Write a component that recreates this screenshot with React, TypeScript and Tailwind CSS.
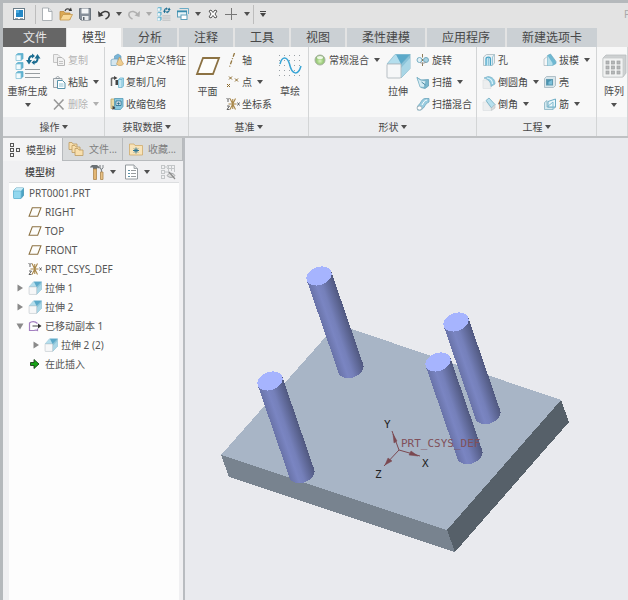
import type { ReactNode } from "react";

type P = { children?: ReactNode };

const Svg = ({ size = 14, box, children }: P & { size?: number; box?: number }) => (
  <svg width={size} height={size} viewBox={`0 0 ${box ?? size} ${box ?? size}`} fill="none" className="shrink-0" aria-hidden="true">
    {children}
  </svg>
);

const Caret = ({ color = "#505050" }: { color?: string }) => (
  <svg width="6" height="4" viewBox="0 0 6 4" className="shrink-0" aria-hidden="true">
    <path d="M0 0H6L3 4Z" fill={color} />
  </svg>
);

/* ---------- quick access icons ---------- */
const AppIcon = () => (
  <Svg size={14}>
    <rect x="1.500" y="1.500" width="11" height="11" fill="#fff" stroke="#6b7d88" />
    <rect x="4" y="3" width="7" height="7" fill="#2388c6" />
    <path d="M4 3H7V6H4Z" fill="#4aa9dd" />
    <path d="M3 11.500H6M8 11.500H11" stroke="#9aa7af" />
  </Svg>
);
const NewIcon = () => (
  <Svg size={14}>
    <path d="M2.500 1H8.500L12 4.500V13.500H2.500Z" fill="#fff" stroke="#9ba1a6" strokeWidth=".8" />
    <path d="M8.500 1V4.500H12" fill="#dfe3e7" stroke="#9ba1a6" strokeWidth=".8" />
  </Svg>
);
const OpenIcon = () => (
  <Svg size={14}>
    <path d="M1 12.500V4.500H5L6 6H11V12.500Z" fill="#dba954" stroke="#bd8a3c" strokeWidth=".8" />
    <path d="M1 13L4 7.500H13.500L10.500 13Z" fill="#f8d998" stroke="#c4974c" strokeWidth=".8" />
    <path d="M6 4C7 1.500 9 1.500 11 2.500" stroke="#444" strokeWidth="1.200" />
    <path d="M9.500 4L13 4L12 .5Z" fill="#333" />
  </Svg>
);
const SaveIcon = () => (
  <Svg size={14}>
    <path d="M1.500 1.500H12.500V13H3L1.500 11.500Z" fill="#87909a" stroke="#6c757e" />
    <rect x="3.500" y="1.500" width="7" height="5" fill="#f4f6f7" />
    <rect x="4" y="9" width="6.500" height="4" fill="#e8ebed" />
    <rect x="5" y="10" width="1.500" height="3" fill="#59636c" />
  </Svg>
);
const UndoIcon = ({ color = "#3c3c3c", flip = false }: { color?: string; flip?: boolean }) => (
  <Svg size={14}>
    <g transform={flip ? "matrix(-1 0 0 1 14 0)" : undefined}>
      <path d="M3 8C5.500 4 10 3.500 11.800 6C13 8.500 11 11 8.500 12" stroke={color} strokeWidth="1.600" />
      <path d="M1 4L1.500 10L6.500 8.500Z" fill={color} />
    </g>
  </Svg>
);
const RegenIcon = ({ size = 14 }: { size?: number }) => (
  <Svg size={size} box={26}>
    {[0, 9, 18].map((y) => (
      <g key={y} strokeWidth=".8">
        <path d={`M1 ${y + 2}L3 ${y + 0.5}H8V${y + 5.5}L6 ${y + 7.5}Z`} fill="#5bb0cf" stroke="#5fb1ce" />
        <path d={`M1 ${y + 2}H6V${y + 7.5}H1Z`} fill="#f2fafd" stroke="#86c3d8" />
      </g>
    ))}
    <path d="M14 8C13.500 4 15.500 3 18 3M22.500 4.500C23 8.500 21 9.500 18.500 9.500" stroke="#1b6d91" strokeWidth="2" />
    <path d="M11 7H17L14 11.500ZM19.500 5.500H25.500L22.500 1ZM17 .5V5.500L20 3ZM19.500 7V12L16.500 9.500Z" fill="#1b6d91" />
    <path d="M10 16.500H25M10 20.500H25M10 24.500H25" stroke="#979da1" />
  </Svg>
);
const WindowsIcon = () => (
  <Svg size={14}>
    <path d="M3.500 1.500H12.500V7" stroke="#6cacc6" />
    <rect x="1.500" y="4" width="9" height="6" fill="#e7f3f8" stroke="#5e9fb9" />
    <path d="M1 4.500H11" stroke="#378cae" strokeWidth="1.500" />
    <rect x="5" y="8" width="6" height="4.500" fill="#fff" stroke="#5e9fb9" />
  </Svg>
);
const CloseIcon = () => (
  <Svg size={14}>
    <path d="M3 4L5 3L7 5.500L9 3L11 4L9 7L11 10L9 11L7 8.500L5 11L3 10L5 7Z" fill="#fff" stroke="#555" />
  </Svg>
);
const PlusIcon = () => (
  <Svg size={14}>
    <path d="M6.500 1V13M0 7.500H12" stroke="#777" />
  </Svg>
);

/* ---------- ribbon icons ---------- */
const CopyIcon = () => (
  <Svg>
    <path d="M1.500 1.500H6L8 3.500V9.500H1.500Z" fill="#eee" stroke="#c4c4c4" />
    <path d="M5.500 4.500H10L12.500 7V12.500H5.500Z" fill="#f3f3f3" stroke="#b6b6b6" />
    <path d="M7 8.500H11M7 10.500H11" stroke="#c4c4c4" />
  </Svg>
);
const PasteIcon = () => (
  <Svg>
    <path d="M1.500 3.500H10V12.500H1.500Z" fill="#eff1f2" stroke="#9ba3a8" />
    <path d="M4 3.500C4 1 7.500 1 7.500 3.500Z" fill="#fff" stroke="#8f989e" />
    <path d="M5.500 5.500H10.500L13 8V13.500H5.500Z" fill="#fff" stroke="#5792aa" />
    <path d="M7 9H11.500M7 11H11.500" stroke="#8cc0d2" />
  </Svg>
);
const DeleteIcon = () => (
  <Svg>
    <path d="M2 2.500L11.500 12.500M11.500 2.500L2 12.500" stroke="#999" strokeWidth="1.600" />
  </Svg>
);
const UdfIcon = () => (
  <Svg>
    <path d="M4.500 3L8 1L11 3V7L8 9L4.500 7Z" fill="#78b4d6" stroke="#5d97b8" strokeWidth=".6" />
    <path d="M1 7L3 6H8V11L6 12.500H1Z" fill="#d4e6ef" stroke="#6d9fba" strokeWidth=".7" />
    <path d="M9.500 4L13.500 11C12 13 8 13 6.500 11Z" fill="#efcd91" stroke="#bd9555" strokeWidth=".6" />
  </Svg>
);
const CopyGeomIcon = () => (
  <Svg>
    <path d="M1.500 3V11M1.500 3H5" stroke="#666" strokeWidth="1.500" />
    <path d="M4 1L7.500 3L4 5ZM5.500 5H8V10H5.500Z" fill="#444" />
    <path d="M8.500 4.500L10 3H13.500V11L12 12.500H8.500Z" fill="#c4e7f3" stroke="#6bb4cf" strokeWidth=".8" />
    <path d="M8.500 4.500H12V12.500M12 4.500L13.500 3" stroke="#6bb4cf" strokeWidth=".8" />
  </Svg>
);
const ShrinkIcon = () => (
  <Svg>
    <path d="M1 2H10V11.500H1Z" fill="#ecdca9" stroke="#bba565" strokeWidth=".8" />
    <path d="M4.500 1.500H13V9.500L10.500 12.500H4.500Z" fill="#88c8df" stroke="#549bb8" strokeWidth=".8" />
    <path d="M6 4H11V8.500H6Z" fill="#fff" stroke="#3d7d9a" />
    <path d="M2.500 8.500L5.500 11L2.500 13Z" fill="#444" />
    <circle cx="8.500" cy="6.500" r="1.200" fill="#276a88" />
  </Svg>
);
const PlaneIcon = ({ size = 14 }: { size?: number }) => (
  <svg width={size} height={size} viewBox="0 0 26 26" fill="none" className="shrink-0" aria-hidden="true">
    <path d="M8 5H24L18 21H2Z" fill="#fdfdfb" stroke="#8c7243" strokeWidth={size > 20 ? 1.8 : 2} />
  </svg>
);
const AxisIcon = () => (
  <Svg>
    <path d="M8.500 0L3.500 14" stroke="#93763f" strokeWidth="1.300" strokeDasharray="4 1.500 1 1.500" />
  </Svg>
);
const PointIcon = () => (
  <Svg>
    <path d="M3 1.500L6 4.500M6 1.500L3 4.500M9 3.500L12 6.500M12 3.500L9 6.500M1 9L4 12M4 9L1 12" stroke="#8c6b2c" />
  </Svg>
);
const CsysIcon = () => (
  <Svg>
    <path d="M4 1.500L9.500 12.500M9.500 1.500L4 12.500M2.500 7H10.500M6.750 2V12" stroke="#a9884a" strokeWidth="1.100" />
    <path d="M.5 1L2 2.500L3.500 1M2 2.500V5M1 9H3.500L1 12.500H3.500M11.500 5.500L13.500 8.500M13.500 5.500L11.500 8.500" stroke="#555" strokeWidth=".9" />
  </Svg>
);
const SketchIcon = () => (
  <Svg size={26}>
    {[3, 8, 13, 18, 23].map((y) => (
      <path key={y} d={`M2 ${y - 0.5}H25`} stroke="#9aa1a6" strokeDasharray="1 4" />
    ))}
    <path d="M3 11C5 3 10 3 12.500 11C15 22 21 23 24 13" stroke="#38a5d6" strokeWidth="1.500" />
  </Svg>
);
const BlendIcon = () => (
  <Svg>
    <defs>
      <radialGradient id="blend" cx=".5" cy=".6" r=".6">
        <stop offset="0" stopColor="#d8f3c0" />
        <stop offset=".5" stopColor="#a0cf7f" />
        <stop offset="1" stopColor="#87ad73" />
      </radialGradient>
    </defs>
    <circle cx="7" cy="7" r="5" fill="url(#blend)" stroke="#a7b59f" />
    <ellipse cx="7" cy="4.500" rx="3" ry="1.500" fill="#eef8e6" />
  </Svg>
);
const ExtrudeIcon = ({ size = 14 }: { size?: number }) => (
  <svg width={size} height={size} viewBox="0 0 26 26" fill="none" className="shrink-0" aria-hidden="true">
    <path d="M2 11L10 1.500H25L16 11Z" fill="#b4deed" stroke="#8fc0d2" strokeWidth=".8" />
    <path d="M16 11L25 1.500V15.500L16 25Z" fill="#8ac3d9" stroke="#77afc5" strokeWidth=".8" />
    <path d="M11 1.500H25L16 11Z" fill="#5ba9c9" />
    <path d="M16 15L25 5V15.500L16 25Z" fill="#a9d6e6" />
    <rect x="2" y="11" width="14" height="14" rx="1" fill="#f6f7f8" stroke="#b7bfc4" />
  </svg>
);
const RevolveIcon = () => (
  <Svg>
    <ellipse cx="3.500" cy="7" rx="2.500" ry="2.500" fill="#e3f1f6" stroke="#75aec4" />
    <ellipse cx="10" cy="7" rx="2.500" ry="2.500" fill="#a8d4e3" stroke="#73a9be" />
    <path d="M6.500 1V4.500M6.500 6V8M6.500 9.500V13" stroke="#8a7a58" />
    <path d="M4 9.500C6 10.500 8 10.500 10 9" stroke="#999" />
  </Svg>
);
const SweepIcon = () => (
  <Svg>
    <path d="M1 2.500L5 5L12.500 4.500V11L9 13.500L5 12.500Z" fill="#79b6cd" stroke="#5a99b1" strokeWidth=".7" />
    <path d="M1 2.500L4.500 5L10 6L8 12.500L4 12Z" fill="#d4ebf3" stroke="#74adc3" strokeWidth=".7" />
    <path d="M5.500 7L9.500 10" stroke="#4d8ca5" />
  </Svg>
);
const SweptBlendIcon = () => (
  <Svg>
    <path d="M1.500 9C5 7 5 2 9 1.500H13V5C9 6 9 11 5 13H1.500Z" fill="#9bcde0" stroke="#6ba5bc" strokeWidth=".8" />
    <ellipse cx="3.500" cy="11" rx="2.500" ry="2" fill="#fff" stroke="#97a9b1" strokeWidth=".8" />
    <path d="M6 8C8 5 8 3.500 11 3" stroke="#fff" />
  </Svg>
);
const HoleIcon = () => (
  <Svg>
    <path d="M1.500 4L4.500 1.500H12.500V10L10 12.500H1.500Z" fill="#eaf1f4" stroke="#a9b7be" strokeWidth=".8" />
    <path d="M4 12.500V6C4 3.500 8.500 3.500 8.500 6V12.500" fill="#c3e7f3" stroke="#46a3c6" strokeWidth="1.200" />
    <path d="M6.500 5V12.500M10.500 4V12.500M10.500 4L12.500 1.500" stroke="#86bdd2" strokeWidth=".8" />
  </Svg>
);
const RoundIcon = () => (
  <Svg>
    <path d="M1 5H7L9 13.500H1Z" fill="#eceeef" stroke="#dde0e2" strokeWidth=".7" />
    <path d="M2 3L6 1.500C11 2 13 5 13 9L9 11.500C9 7 6.500 4.500 2 3Z" fill="#8fcbe0" stroke="#7db2c7" strokeWidth=".7" />
    <path d="M5 3C8.500 3.500 10.500 6 10.500 9" stroke="#dff4fb" strokeWidth="1.200" />
  </Svg>
);
const ChamferIcon = () => (
  <Svg>
    <path d="M1 5H5L9 12.500V13.500H1Z" fill="#eceeef" stroke="#dde0e2" strokeWidth=".7" />
    <path d="M4 3.500L7 1L13 7.500L9.500 11Z" fill="#b7e0ee" stroke="#6ea9bf" strokeWidth=".8" />
    <path d="M9.500 11L13 7.500V11L9.500 13.500Z" fill="#d9dcdd" stroke="#b9bfc2" strokeWidth=".6" />
  </Svg>
);
const DraftIcon = () => (
  <Svg>
    <path d="M1 6L5 3V12.500H1Z" fill="#f5f7f8" stroke="#b1bcc1" strokeWidth=".8" />
    <path d="M4.500 2.500L7.500 1L13 8.500V10.500L9.500 12.500H4.500Z" fill="#6fb8d2" stroke="#6aa9c0" strokeWidth=".7" />
    <path d="M4.500 2.500L9.500 10V12.500H4.500Z" fill="#b7dfeb" />
  </Svg>
);
const ShellIcon = () => (
  <Svg>
    <path d="M1.500 3.500L3.500 1.500H12.500V10.500L10.500 12.500H1.500Z" fill="#d9e6eb" stroke="#a2b4bc" strokeWidth=".8" />
    <rect x="3.500" y="4.500" width="6" height="5.500" fill="#4c93b0" stroke="#5f9bb2" />
    <path d="M5.500 7L9 5V9.500H5.500Z" fill="#7cc0da" />
  </Svg>
);
const RibIcon = () => (
  <Svg>
    <path d="M1.500 5.500L4 3.500V10H12.500L10 12.500H1.500Z" fill="#d4e9f0" stroke="#86b2c2" strokeWidth=".8" />
    <path d="M5 4.500L12.500 2V10H5Z" fill="#eaf6fa" stroke="#6dadc5" />
    <path d="M4 10L10 5V12.500" stroke="#7ebbd0" />
  </Svg>
);
const PatternIcon = () => (
  <Svg size={26}>
    <path d="M2 5L5 2H25V20L22 24H2Z" fill="#cdd0d1" stroke="#b9bdbf" strokeWidth=".8" />
    <rect x="2" y="5" width="20" height="19" rx="1" fill="#f1f2f2" stroke="#c8cbcc" strokeWidth=".8" />
    {[8, 13, 18].map((y) =>
      [5, 10.5, 16].map((x) => <rect key={`${x}-${y}`} x={x} y={y} width="3" height="3" fill="#b5b7b8" stroke="#9fa1a2" strokeWidth=".7" />),
    )}
  </Svg>
);

/* ---------- tree icons ---------- */
const TreeIcon = ({ color = "#555" }: { color?: string }) => (
  <svg width="12" height="16" viewBox="0 0 12 16" fill="none" className="shrink-0" stroke={color} aria-hidden="true">
    <rect x="1.500" y="1.500" width="3" height="3" />
    <rect x="1.500" y="6.500" width="3" height="3" />
    <rect x="1.500" y="11.500" width="3" height="3" />
    <rect x="7.500" y="6.500" width="3" height="3" />
  </svg>
);
const FoldersIcon = () => (
  <Svg size={16}>
    {[0, 3, 6].map((d) => (
      <path key={d} d={`M${d + 1} ${d + 1.5}H${d + 4}L${d + 5} ${d + 3}H${d + 9}V${d + 8.5}H${d + 1}Z`} fill="#f8dfad" stroke="#bb9a60" strokeWidth=".8" />
    ))}
  </Svg>
);
const FavoriteIcon = () => (
  <Svg size={14}>
    <path d="M.5 2H5L6 3.500H13.500V13H.5Z" fill="#f8e3b8" stroke="#cfab6c" strokeWidth=".8" />
    <path d="M7 5.500V11.500M4 8.500H10M5 6.500L9 10.500M9 6.500L5 10.500" stroke="#2c7494" />
  </Svg>
);
const ToolsIcon = () => (
  <Svg size={16}>
    <path d="M1 3L3 1H8L11 3.500L9 4.500L8 3.500V5H4V3.500H1Z" fill="#6a7074" />
    <path d="M4.500 5H7.500V15.500H4.500Z" fill="#e3b674" stroke="#ad874c" strokeWidth=".8" />
    <path d="M11 1V4L12.500 5.500V8" stroke="#80868a" strokeWidth="1.200" />
    <path d="M14 1V4L12.500 5.500" stroke="#80868a" />
    <path d="M11.500 8H14V15.500H11.500Z" fill="#e8c287" stroke="#ad874c" strokeWidth=".8" />
  </Svg>
);
const ListIcon = () => (
  <Svg size={16}>
    <path d="M1.500 1H10L13.500 4.500V15H1.500Z" fill="#fff" stroke="#949a9e" />
    <path d="M10 1V4.500H13.500" fill="#dde0e2" stroke="#949a9e" strokeWidth=".8" />
    <path d="M4 6.500H6M4 9.500H6M4 12.500H6" stroke="#5b90a6" />
    <path d="M7 6.500H12M7 9.500H12M7 12.500H12" stroke="#999d9f" />
  </Svg>
);
const HiddenTreeIcon = () => (
  <Svg size={16}>
    <g stroke="#c3c6c8">
      <rect x="1.500" y="1.500" width="3" height="3" />
      <rect x="1.500" y="6.500" width="3" height="3" />
      <rect x="1.500" y="11.500" width="3" height="3" />
      <path d="M5 3H8M5 8H8M8.500 1V9M11.500 1V7M14.500 1V8M7 4.500H14M7 1.500H15" />
    </g>
    <path d="M7 11.500C9 8.500 13 8.500 15 11.500C13 14 9 14 7 11.500Z" fill="#ddd" stroke="#a3a6a8" />
    <path d="M9 8L15 15" stroke="#8c8c8c" strokeWidth="1.200" />
  </Svg>
);
const PartIcon = () => (
  <Svg>
    <path d="M1.500 5L4 2H11.500V9.500L9 12.500H2Z" fill="#4ba3c5" stroke="#4595b4" strokeWidth=".8" strokeLinejoin="round" />
    <path d="M1.500 5L4 2H11.500L9 5Z" fill="#c4ebf7" />
    <rect x="1.500" y="5" width="7.500" height="7.500" rx="1" fill="#93d8ef" stroke="#6dbbd8" strokeWidth=".8" />
  </Svg>
);
const MovedCopyIcon = () => (
  <Svg>
    <path d="M6 11.500H1.500V4C3.500 2 7 2 9.500 4.500M6 11.500C7.500 11 8.500 11 9.500 11.500V9.500" stroke="#a37fc0" strokeWidth="1.200" />
    <path d="M4.500 7H11" stroke="#444" />
    <path d="M10 4.500L13.500 7L10 9.500Z" fill="#333" />
  </Svg>
);
const InsertIcon = () => (
  <Svg>
    <path d="M2.500 5.500H6V2.500L11 7L6 11.500V8.500H2.500Z" fill="#17a417" stroke="#1c3f1c" strokeWidth=".9" />
  </Svg>
);

/* ---------- building blocks ---------- */
const QuickButton = ({ label, children }: P & { label: string }) => (
  <button aria-label={label} className="flex h-full w-[19px] items-center justify-center">{children}</button>
);
const QuickCaret = ({ label, color }: { label: string; color?: string }) => (
  <button aria-label={label} className="flex h-full w-[11px] items-center justify-center">
    <Caret color={color} />
  </button>
);

const Small = ({ icon, text, menu, disabled }: { icon: ReactNode; text: string; menu?: boolean; disabled?: boolean }) => (
  <button disabled={disabled} className={`flex h-[22px] items-center gap-[2px] whitespace-nowrap ${disabled ? "text-[#b4b4b4]" : ""}`}>
    {icon}
    <span>{text}</span>
    {menu && <span className="pl-[3px]"><Caret color={disabled ? "#b0b0b0" : undefined} /></span>}
  </button>
);

const Big = ({ icon, text, menu }: { icon: ReactNode; text: string; menu?: boolean }) => (
  <button className="flex flex-col items-center pt-[4px] whitespace-nowrap">
    {icon}
    <span className="h-[18px] pt-[5px] leading-[14px]">{text}</span>
    {menu && <span className="pt-[6px]"><Caret /></span>}
  </button>
);

const Group = ({ title, className, children }: P & { title?: string; className: string }) => (
  <section className={`flex shrink-0 flex-col border-r border-[#d3d5d6] ${className}`}>
    <div className="flex h-[70px] items-start pt-[2px]">{children}</div>
    <button className="flex h-[19px] w-full items-center justify-center gap-[2px] bg-[#edeef0]" aria-label={title ?? "阵列"}>
      {title && <><span>{title}</span><Caret /></>}
    </button>
  </section>
);

const RibbonTab = ({ text, active }: { text: string; active?: boolean }) => (
  <button
    role="tab"
    aria-selected={!!active}
    className={`h-full shrink-0 border-r border-[#e3e3e3] px-[15px] text-xs leading-[19px] ${active ? "bg-[#f8f8f8]" : "bg-[#cbd0d4]"}`}
  >
    {text}
  </button>
);

const PanelTab = ({ icon, text, active }: { icon: ReactNode; text: string; active?: boolean }) => (
  <button
    role="tab"
    aria-selected={!!active}
    className={`flex flex-1 items-center justify-center gap-[5px] border-r border-[#b7babd] whitespace-nowrap ${
      active ? "bg-[#f4f4f5]" : "border-b bg-[#d9dbdc] text-[#808080]"
    }`}
  >
    {icon}
    {text}
  </button>
);

const indents = ["pl-[3px]", "pl-[7px]", "pl-[23px]"];

const Node = ({ depth, icon, text, state }: { depth: number; icon: ReactNode; text: string; state?: "open" | "closed" }) => (
  <li role="treeitem" aria-expanded={state ? state === "open" : undefined} className={`flex h-[19px] items-center whitespace-nowrap ${indents[depth]}`}>
    {depth > 0 && (
      <span className="flex w-3 shrink-0">
        {state && (
          <svg width="8" height="8" viewBox="0 0 8 8" aria-hidden="true">
            <path d={state === "open" ? "M.5 1.500H7.500L4 7.500Z" : "M1.500 .5V7.500L7 4Z"} fill="#8a8a8a" />
          </svg>
        )}
      </span>
    )}
    {icon}
    <span className="pl-[3px]">{text}</span>
  </li>
);

const Pin = ({ x, y }: { x: number; y: number }) => (
  <g transform={`translate(${x} ${y}) rotate(-19)`} shapeRendering="crispEdges">
    <path d="M-13 0V98A13 9 0 0 0 13 98V0Z" fill="url(#pin)" />
    <ellipse rx="13" ry="9" fill="#a6b4fe" />
  </g>
);

const Viewport = () => (
  <svg viewBox="185 138 443 462" className="h-full w-full" role="img" aria-label="PRT0001">
    <defs>
      <linearGradient id="pin" x1="0" x2="1" y1="0" y2="0">
        <stop offset="0" stopColor="#6973a8" />
        <stop offset=".3" stopColor="#7a85c2" />
        <stop offset=".5" stopColor="#7580ba" />
        <stop offset="1" stopColor="#50587f" />
      </linearGradient>
    </defs>
    <g shapeRendering="crispEdges">
      <path d="M221 455L337 324L561 400L447 530Z" fill="#a8b5c6" />
      <path d="M221 455L447 530L455 552L229 477Z" fill="#78838f" />
      <path d="M447 530L561 400L569 422L455 552Z" fill="#566069" />
    </g>
    <Pin x={319} y={276} />
    <Pin x={270} y={381} />
    <Pin x={456} y={322} />
    <Pin x={438} y={362} />
    <g stroke="#7b4850" fill="#7b4850">
      <path d="M399 450L392 431M399 450L420 456M399 450L384 466" fill="none" />
      <path d="M393 434L397 441L394 443ZM418 456L409 455L411 451ZM385 465L388 458L392 461Z" strokeWidth=".5" />
    </g>
    <g fontFamily="'DejaVu Sans Mono', monospace" fontSize="11">
      <text x="401" y="447" fill="#80505a">PRT_CSYS_DEF</text>
      <g fill="#222">
        <text x="384" y="428">Y</text>
        <text x="422" y="467">X</text>
        <text x="375" y="478">Z</text>
      </g>
    </g>
  </svg>
);

export default function App() {
  return (
    <div className="flex h-screen flex-col overflow-hidden border-t-[3px] border-l-[3px] border-[#b5b9bc] bg-[#e9eaee] font-['Noto_Sans','Noto_Sans_CJK_SC',sans-serif] text-[10px] leading-[14px] text-[#484848]">
      <header className="flex h-[25px] shrink-0 items-center bg-[#e3e3e3] pb-[3px]">
        <button aria-label="窗口" className="flex h-full w-8 items-center justify-center"><AppIcon /></button>
        <span className="mr-px h-[19px] w-px bg-[#bdbdbd]" />
        <QuickButton label="新建"><NewIcon /></QuickButton>
        <QuickButton label="打开"><OpenIcon /></QuickButton>
        <QuickButton label="保存"><SaveIcon /></QuickButton>
        <QuickButton label="撤销"><UndoIcon /></QuickButton>
        <QuickCaret label="撤销列表" />
        <QuickButton label="重做"><UndoIcon color="#b0b0b0" flip /></QuickButton>
        <QuickCaret label="重做列表" color="#aaa" />
        <QuickButton label="重新生成"><RegenIcon /></QuickButton>
        <QuickButton label="窗口列表"><WindowsIcon /></QuickButton>
        <QuickCaret label="切换窗口" />
        <QuickButton label="关闭"><CloseIcon /></QuickButton>
        <QuickButton label="添加"><PlusIcon /></QuickButton>
        <QuickCaret label="添加列表" />
        <span className="ml-px h-[19px] w-px bg-[#bdbdbd]" />
        <button aria-label="自定义" className="flex h-full w-[18px] flex-col items-center justify-center gap-px">
          <span className="h-px w-[6px] bg-[#444]" />
          <Caret color="#444" />
        </button>
        <span className="ml-auto w-1 overflow-hidden text-[#a8a8a8]">P</span>
      </header>

      <div role="tablist" className="flex h-[19px] shrink-0 bg-[#e3e3e3] pr-[30px]">
        <button role="tab" aria-selected="false" className="h-full shrink-0 border-r border-[#e3e3e3] bg-[#666] pr-[19px] pl-5 text-xs leading-[19px] text-[#e6e6e6]">文件</button>
        <div className="flex max-w-[532px] flex-1 justify-between">
          <RibbonTab text="模型" active />
          {["分析", "注释", "工具", "视图", "柔性建模", "应用程序", "新建选项卡"].map((t) => (
            <RibbonTab key={t} text={t} />
          ))}
        </div>
      </div>

      <div className="flex shrink-0 overflow-hidden border-b-2 border-[#bfc1c3] bg-[#f8f8f8]">
        <Group title="操作" className="w-[102px]">
          <div className="flex w-[49px] justify-center"><Big icon={<RegenIcon size={26} />} text="重新生成" menu /></div>
          <div>
            <Small icon={<CopyIcon />} text="复制" disabled />
            <Small icon={<PasteIcon />} text="粘贴" menu />
            <Small icon={<DeleteIcon />} text="删除" menu disabled />
          </div>
        </Group>
        <Group title="获取数据" className="w-[84px]">
          <div className="pl-[5px]">
            <Small icon={<UdfIcon />} text="用户定义特征" />
            <Small icon={<CopyGeomIcon />} text="复制几何" />
            <Small icon={<ShrinkIcon />} text="收缩包络" />
          </div>
        </Group>
        <Group title="基准" className="w-[120px]">
          <div className="flex w-[37px] justify-center"><Big icon={<PlaneIcon size={26} />} text="平面" /></div>
          <div>
            <Small icon={<AxisIcon />} text="轴" />
            <Small icon={<PointIcon />} text="点" menu />
            <Small icon={<CsysIcon />} text="坐标系" />
          </div>
          <div className="flex flex-1 justify-center"><Big icon={<SketchIcon />} text="草绘" /></div>
        </Group>
        <Group title="形状" className="w-[168px]">
          <div className="pl-1">
            <Small icon={<BlendIcon />} text="常规混合" menu />
          </div>
          <div className="flex flex-1 justify-center"><Big icon={<ExtrudeIcon size={26} />} text="拉伸" /></div>
          <div className="pr-1">
            <Small icon={<RevolveIcon />} text="旋转" />
            <Small icon={<SweepIcon />} text="扫描" menu />
            <Small icon={<SweptBlendIcon />} text="扫描混合" />
          </div>
        </Group>
        <Group title="工程" className="w-[120px]">
          <div className="w-[66px] pl-[5px]">
            <Small icon={<HoleIcon />} text="孔" />
            <Small icon={<RoundIcon />} text="倒圆角" menu />
            <Small icon={<ChamferIcon />} text="倒角" menu />
          </div>
          <div>
            <Small icon={<DraftIcon />} text="拔模" menu />
            <Small icon={<ShellIcon />} text="壳" />
            <Small icon={<RibIcon />} text="筋" menu />
          </div>
        </Group>
        <Group className="flex-1">
          <div className="pl-1"><Big icon={<PatternIcon />} text="阵列" menu /></div>
        </Group>
      </div>

      <div className="flex min-h-0 flex-1">
        <aside className="flex w-[182px] shrink-0 flex-col border-r-2 border-[#b9bcc0] bg-[#f0f0f2]">
          <div role="tablist" className="flex h-[23px] shrink-0">
            <PanelTab icon={<TreeIcon />} text="模型树" active />
            <PanelTab icon={<FoldersIcon />} text="文件..." />
            <PanelTab icon={<FavoriteIcon />} text="收藏..." />
          </div>
          <div className="flex h-[21px] shrink-0 items-center pr-[7px] pl-[22px]">
            <h2 className="mr-auto font-medium">模型树</h2>
            <button aria-label="设置" className="flex items-center gap-[5px]"><ToolsIcon /><Caret /></button>
            <button aria-label="显示" className="ml-2 flex items-center gap-[4px]"><ListIcon /><Caret /></button>
            <button aria-label="隐藏" className="ml-[10px]"><HiddenTreeIcon /></button>
          </div>
          <ul role="tree" className="mr-[4px] ml-[6px] flex-1 border-t border-[#dcdee0] bg-[#fdfdfd] text-[#555]">
            <Node depth={0} icon={<PartIcon />} text="PRT0001.PRT" />
            <Node depth={1} icon={<PlaneIcon />} text="RIGHT" />
            <Node depth={1} icon={<PlaneIcon />} text="TOP" />
            <Node depth={1} icon={<PlaneIcon />} text="FRONT" />
            <Node depth={1} icon={<CsysIcon />} text="PRT_CSYS_DEF" />
            <Node depth={1} icon={<ExtrudeIcon />} text="拉伸 1" state="closed" />
            <Node depth={1} icon={<ExtrudeIcon />} text="拉伸 2" state="closed" />
            <Node depth={1} icon={<MovedCopyIcon />} text="已移动副本 1" state="open" />
            <Node depth={2} icon={<ExtrudeIcon />} text="拉伸 2 (2)" state="closed" />
            <Node depth={1} icon={<InsertIcon />} text="在此插入" />
          </ul>
        </aside>
        <main className="min-w-0 flex-1">
          <Viewport />
        </main>
      </div>
    </div>
  );
}
